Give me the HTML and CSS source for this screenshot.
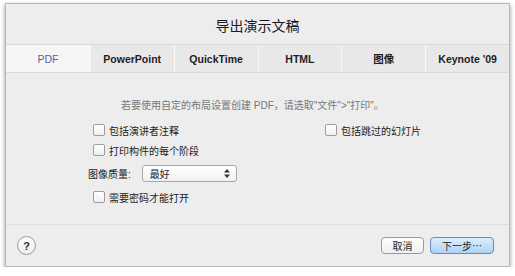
FILE: index.html
```html
<!DOCTYPE html>
<html lang="zh-CN">
<head>
  <meta charset="UTF-8">
  <title>导出演示文稿</title>
  <link rel="stylesheet" href="styles.css">
</head>
<body>
  <div class="sheet">
    <div class="sheet-title">导出演示文稿</div>

    <div class="tabs">
      <div class="tab active">PDF</div>
      <div class="tab">PowerPoint</div>
      <div class="tab">QuickTime</div>
      <div class="tab">HTML</div>
      <div class="tab">图像</div>
      <div class="tab">Keynote '09</div>
    </div>

    <div class="pane">
      <p class="hint">若要使用自定的布局设置创建 PDF，请选取"文件"&gt;"打印"。</p>

      <div class="options">
        <div class="col-left">
          <label class="check"><span class="box"></span>包括演讲者注释</label>
          <label class="check"><span class="box"></span>打印构件的每个阶段</label>
          <div class="quality">
            <span>图像质量:</span>
            <div class="select">
              <span>最好</span>
              <svg width="6" height="9" viewBox="0 0 6 9"><path d="M3 0 L6 3.5 H0 Z M3 9 L6 5.5 H0 Z" fill="#333"/></svg>
            </div>
          </div>
          <label class="check"><span class="box"></span>需要密码才能打开</label>
        </div>
        <div class="col-right">
          <label class="check"><span class="box"></span>包括跳过的幻灯片</label>
        </div>
      </div>
    </div>

    <div class="footer">
      <div class="help">?</div>
      <div class="actions">
        <button class="btn">取消</button>
        <button class="btn primary">下一步…</button>
      </div>
    </div>
  </div>
</body>
</html>
```

FILE: styles.css
```css
body {
  margin: 0;
  background-color: #ffffff;
  font-family: 'Liberation Sans', 'Noto Sans CJK SC', sans-serif;
  color: #222222;
}

.sheet {
  width: 503px;
  height: 262px;
  margin: 3px 0 0 5px;
  background-color: #ededed;
  border: 1px solid #b9b9b9;
  box-shadow: 0 2px 4px rgba(0, 0, 0, 0.45);
  display: flex;
  flex-direction: column;
}

.sheet-title {
  height: 40px;
  line-height: 42px;
  text-align: center;
  font-family: 'Noto Sans CJK SC', sans-serif;
  font-size: 14px;
  color: #1a1a1a;
}

.tabs {
  display: grid;
  grid-template-columns: repeat(6, 1fr);
  height: 27px;
  background-color: #e8e8e8;
  border-top: 1px solid #d9d9d9;
  border-bottom: 1px solid #d9d9d9;
}

.tab {
  display: flex;
  align-items: center;
  justify-content: center;
  font-size: 10.5px;
  font-weight: bold;
  color: #1e1e1e;
  border-left: 1px solid #f6f6f6;
}

.tab:first-child {
  border-left: none;
}

.tab.active {
  background-color: #f5f5f5;
  color: #4b69a8;
  font-weight: normal;
}

.pane {
  flex: 1;
  padding: 24px 0 0 82px;
}

.hint {
  margin: 0 0 8px 33px;
  font-size: 10px;
  color: #777777;
}

.options {
  display: flex;
}

.col-left {
  width: 232px;
  display: flex;
  flex-direction: column;
}

.check {
  display: flex;
  align-items: center;
  gap: 4px;
  height: 20px;
  margin-left: 5px;
  font-size: 10px;
}

.box {
  width: 10px;
  height: 10px;
  border: 1px solid #9c9c9c;
  border-radius: 2px;
  background: linear-gradient(#ffffff, #f0f0f0);
}

.quality {
  display: flex;
  align-items: center;
  gap: 11px;
  height: 26px;
  margin-bottom: 1px;
  font-size: 10px;
}

.select {
  width: 80px;
  height: 15px;
  padding: 0 6px 0 7px;
  display: flex;
  align-items: center;
  justify-content: space-between;
  border: 1px solid #a8a8a8;
  border-radius: 3px;
  background: linear-gradient(#ffffff, #f1f1f1);
  font-size: 10px;
}

.footer {
  height: 41px;
  border-top: 1px solid #dedede;
  display: flex;
  align-items: center;
  justify-content: space-between;
  padding: 0 15px 0 11px;
}

.help {
  width: 17px;
  height: 17px;
  border: 1px solid #9a9a9a;
  border-radius: 50%;
  background: linear-gradient(#ffffff, #ececec);
  display: flex;
  align-items: center;
  justify-content: center;
  font-size: 11px;
  font-weight: bold;
  color: #333333;
}

.actions {
  display: flex;
  gap: 6px;
}

.btn {
  height: 17px;
  padding: 0;
  width: 43px;
  border: 1px solid #9b9b9b;
  border-radius: 4px;
  background: linear-gradient(#ffffff, #efefef);
  font-family: 'Noto Sans CJK SC', sans-serif;
  font-size: 10px;
  color: #222222;
}

.btn.primary {
  width: 64px;
  border-color: #6a8cb6;
  background: linear-gradient(#dceefc, #aed3f5);
}
```
